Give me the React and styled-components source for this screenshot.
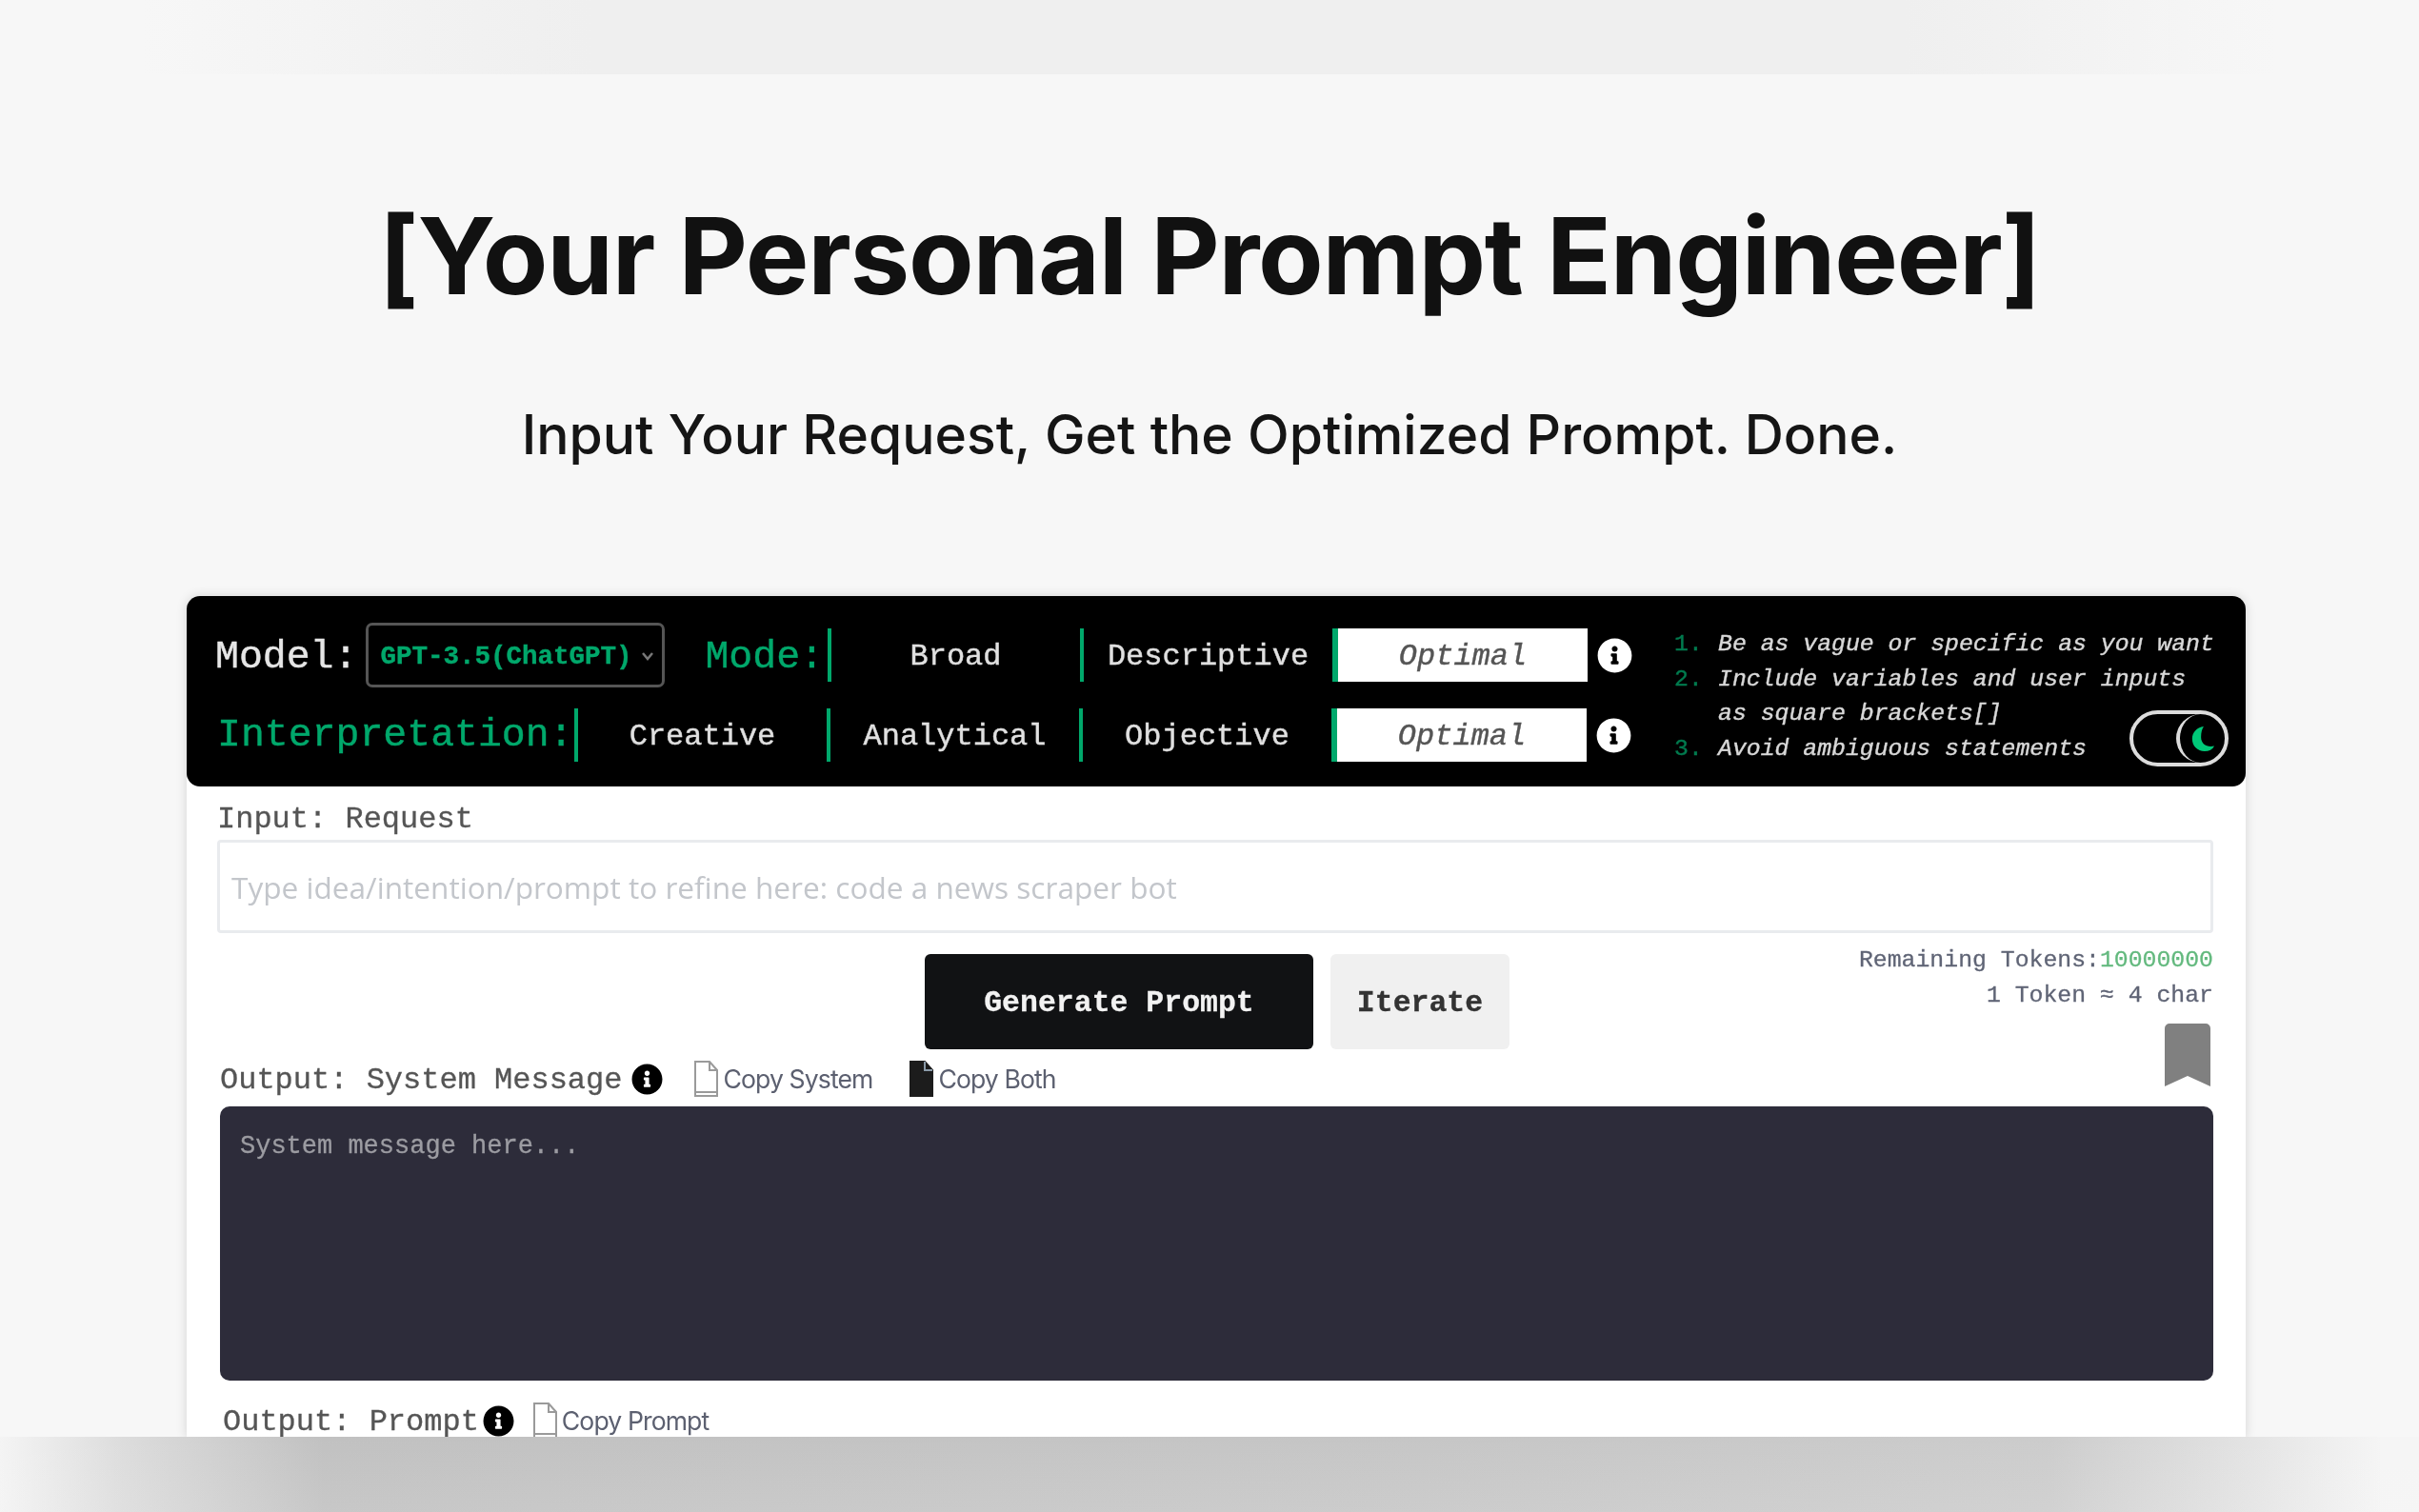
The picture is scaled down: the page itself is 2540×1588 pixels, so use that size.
import React from "react";
import styled, { createGlobalStyle } from "styled-components";
import { FaInfoCircle } from "react-icons/fa";

const GREEN = "#00a86b";
const MONO = '"Liberation Mono", "DejaVu Sans Mono", monospace';
const SANS = 'Inter, "Noto Sans", sans-serif';

const GlobalStyle = createGlobalStyle`
  html, body {
    margin: 0;
    padding: 0;
    background: #f7f7f7;
  }
  * {
    box-sizing: border-box;
  }
`;

const PageFrame = styled.div`
  height: 1588px;
  display: flex;
  flex-direction: column;
  overflow: hidden;
  background: #f7f7f7;
`;

const TopFade = styled.div`
  flex: 0 0 78px;
  background: linear-gradient(90deg, #f7f7f7 150px, #efefef 620px, #efefef 2000px, #f7f7f7 2390px);
`;

const BottomFade = styled.div`
  flex: 0 0 79px;
  background:
    linear-gradient(180deg, rgba(247, 247, 247, 0) 0%, rgba(247, 247, 247, 0.12) 100%),
    linear-gradient(90deg, #f4f4f4 0, #dcdcdc 130px, #c1c1c1 340px, #c6c6c6 1500px, #cccccc 2150px, #e2e2e2 2350px, #f5f5f5 2500px);
`;

const Main = styled.main`
  flex: 1;
  min-height: 0;
  overflow: hidden;
  display: flex;
  flex-direction: column;
  align-items: center;
  filter: blur(0.6px);
`;

const Title = styled.h1`
  margin: 120px 0 0;
  font-family: ${SANS};
  font-size: 112px;
  font-weight: 700;
  line-height: 140px;
  color: #111;
  letter-spacing: -1.25px;
`;

const Subtitle = styled.h2`
  margin: 84px 0 134px;
  font-family: ${SANS};
  font-size: 57px;
  font-weight: 500;
  line-height: 70px;
  color: #151515;
`;

const Card = styled.section`
  flex: none;
  width: 2162px;
  align-self: flex-start;
  margin-left: 196px;
  background: #fff;
  border-radius: 14px 14px 0 0;
  box-shadow: 0 0 12px rgba(0, 0, 0, 0.14);
`;

const Header = styled.header`
  height: 200px;
  display: flex;
  padding: 34px 18px 26px 32px;
  background: #000;
  border-radius: 14px;
  font-family: ${MONO};
  -webkit-text-stroke: 0.4px;
`;

const Controls = styled.div`
  flex: 0 0 1486px;
  display: flex;
  flex-direction: column;
  gap: 28px;
`;

const ControlRow = styled.div`
  height: 56px;
  display: flex;
  align-items: center;
`;

const Lead = styled.div`
  flex: 0 0 ${(p) => p.$width}px;
  display: flex;
  align-items: center;
  justify-content: space-between;
`;

const ModelGroup = styled.div`
  display: flex;
  align-items: center;
  gap: 9px;
  margin-left: -2px;
`;

const FieldLabel = styled.span`
  margin-right: ${(p) => p.$trail || 0}px;
  padding-top: ${(p) => p.$drop}px;
  font-size: 41.5px;
  line-height: 56px;
  color: ${(p) => (p.$accent ? GREEN : "#e6e6e6")};
`;

const ModelSelect = styled.div`
  width: 314px;
  height: 68px;
  display: flex;
  align-items: center;
  justify-content: space-between;
  padding: 2px 8px 0 12px;
  border: 3px solid #555;
  border-radius: 7px;
  color: ${GREEN};
  font-size: 27.5px;
  font-weight: 700;
`;

const Chevron = styled.svg`
  width: 14px;
  height: 10px;
  fill: none;
  stroke: #777;
  stroke-width: 2.5;
`;

const Cell = styled.div`
  flex: 0 0 ${(p) => (p.$active ? 268 : 265)}px;
  height: 100%;
  display: flex;
  align-items: center;
  justify-content: center;
  padding-top: 2px;
  border-left: ${(p) => (p.$active ? 6 : 4)}px solid ${GREEN};
  background: ${(p) => (p.$active ? "#fff" : "transparent")};
  color: ${(p) => (p.$active ? "#555" : "#e0e0e0")};
  font-size: 32px;
  font-style: ${(p) => (p.$active ? "italic" : "normal")};
`;

const HeaderInfo = styled(FaInfoCircle)`
  flex: none;
  margin-left: 10px;
  font-size: 37px;
  color: #fff;
`;

const Tips = styled.div`
  position: relative;
  flex: 1;
  margin: -2px 0 0 44px;
  font-size: 24.8px;
  line-height: 36.6px;
  font-style: italic;
  color: #d8d8d8;
`;

const Tip = styled.div`
  display: flex;
`;

const TipNumber = styled.span`
  flex: 0 0 46px;
  font-style: normal;
  color: #007a4e;
`;

const ThemeToggle = styled.div`
  position: absolute;
  right: 0;
  bottom: -5px;
  width: 104px;
  height: 59px;
  display: flex;
  justify-content: flex-end;
  border: 4px solid #dcdcdc;
  border-radius: 30px;
`;

const ToggleKnob = styled.div`
  width: 51px;
  height: 51px;
  display: flex;
  align-items: center;
  justify-content: center;
  border-left: 4px solid #dcdcdc;
  border-radius: 50%;
`;

const Moon = styled.svg`
  width: 26px;
  height: 28px;
  fill: #00c878;
`;

const Body = styled.div`
  padding: 14px 34px 0 32px;
  font-family: ${MONO};
  -webkit-text-stroke: 0.3px;
`;

const InputLabel = styled.div`
  padding-top: 2px;
  font-size: 32px;
  line-height: 38px;
  color: #555;
  height: 40px;
`;

const RequestInput = styled.input`
  display: block;
  width: 100%;
  height: 98px;
  margin-top: 2px;
  padding: 0 12px;
  border: 3px solid #e9ebee;
  border-radius: 4px;
  outline: none;
  background: #fff;
  font-family: "Open Sans", sans-serif;
  font-size: 31.6px;
  -webkit-text-stroke: 0;

  &::placeholder {
    color: #c3c6cb;
  }
`;

const ActionGrid = styled.div`
  display: grid;
  grid-template-columns: 1fr auto 1fr;
  grid-template-rows: 122px 60px;
`;

const Buttons = styled.div`
  grid-column: 2;
  grid-row: 1;
  display: flex;
  gap: 18px;
  padding: 22px 0 0 4px;
`;

const ActionButton = styled.button`
  height: 100px;
  width: ${(p) => (p.$primary ? 408 : 188)}px;
  padding-top: 4px;
  border: none;
  border-radius: 6px;
  background: ${(p) => (p.$primary ? "#111214" : "#f0f0f0")};
  color: ${(p) => (p.$primary ? "#f2f2f2" : "#333")};
  font-family: ${MONO};
  font-size: 31.5px;
  font-weight: 700;
`;

const TokenColumn = styled.div`
  grid-column: 3;
  grid-row: 1 / span 2;
  display: flex;
  flex-direction: column;
  align-items: flex-end;
  padding-top: 10px;
  font-size: 24.8px;
  line-height: 36.6px;
  color: #5f6475;
`;

const TokenCount = styled.span`
  color: #63b97e;
`;

const SaveMark = styled.svg`
  width: 48px;
  height: 66px;
  margin: 12px 3px 0 0;
  fill: #808080;
`;

const OutputBar = styled.div`
  grid-column: 1 / span 2;
  grid-row: 2;
  display: flex;
  align-items: center;
  height: 38px;
  margin-top: 12px;
  padding-left: 3px;
`;

const PromptBar = styled(OutputBar)`
  margin-top: 23px;
  padding-left: 6px;
`;

const OutputLabel = styled.span`
  padding-top: 3px;
  font-size: 32px;
  color: #555;
  white-space: pre;
`;

const OutputInfo = styled(FaInfoCircle)`
  flex: none;
  margin-left: ${(p) => p.$gap}px;
  font-size: 33px;
  color: #000;
`;

const CopyAction = styled.span`
  display: flex;
  align-items: center;
  gap: 4px;
  margin-left: ${(p) => p.$gap}px;
  font-family: ${SANS};
  font-size: 26.6px;
  letter-spacing: -0.9px;
  color: #5c6070;
  -webkit-text-stroke: 0;
`;

const PageGlyph = styled.svg`
  width: 27px;
  height: 38px;
  fill: ${(p) => (p.$solid ? "#1c1c1c" : "#fff")};
  stroke: ${(p) => (p.$solid ? "#1c1c1c" : "#9a9a9a")};
  stroke-width: 2;
`;

const MessageBox = styled.textarea`
  display: block;
  width: calc(100% - 3px);
  height: 288px;
  margin-left: 3px;
  padding: 26px 21px;
  border: none;
  border-radius: 10px;
  outline: none;
  resize: none;
  background: #2d2c3a;
  font-family: ${MONO};
  font-size: 27px;
  line-height: 32px;

  &::placeholder {
    color: #9c9ca2;
  }
`;

const CopyIcon = ({ solid }) => (
  <PageGlyph $solid={solid} viewBox="0 0 27 38">
    <path d="M2 1h15l8 9v27H2z" />
    <path d="M17 1v9h8" fill="none" stroke={solid ? "#8a9aa8" : "#9a9a9a"} />
    <path d="M2 33h23" fill="none" stroke={solid ? "#1c1c1c" : "#9a9a9a"} />
  </PageGlyph>
);

const App = () => {
  return (
    <PageFrame>
      <GlobalStyle />
      <TopFade />
      <Main>
        <Title>[Your Personal Prompt Engineer]</Title>
        <Subtitle>Input Your Request, Get the Optimized Prompt. Done.</Subtitle>
        <Card>
          <Header>
            <Controls>
              <ControlRow>
                <Lead $width={641}>
                  <ModelGroup>
                    <FieldLabel $drop={3}>Model:</FieldLabel>
                    <ModelSelect>
                      GPT-3.5(ChatGPT)
                      <Chevron viewBox="0 0 14 10">
                        <path d="M2 2l5 6 5-6" />
                      </Chevron>
                    </ModelSelect>
                  </ModelGroup>
                  <FieldLabel $accent $drop={3} $trail={4}>
                    Mode:
                  </FieldLabel>
                </Lead>
                <Cell>Broad</Cell>
                <Cell>Descriptive</Cell>
                <Cell $active>Optimal</Cell>
                <HeaderInfo />
              </ControlRow>
              <ControlRow>
                <Lead $width={375}>
                  <FieldLabel $accent $drop={0}>
                    Interpretation:
                  </FieldLabel>
                </Lead>
                <Cell>Creative</Cell>
                <Cell>Analytical</Cell>
                <Cell>Objective</Cell>
                <Cell $active>Optimal</Cell>
                <HeaderInfo />
              </ControlRow>
            </Controls>
            <Tips>
              <Tip>
                <TipNumber>1.</TipNumber>
                <span>Be as vague or specific as you want</span>
              </Tip>
              <Tip>
                <TipNumber>2.</TipNumber>
                <span>
                  Include variables and user inputs
                  <br />
                  as square brackets[]
                </span>
              </Tip>
              <Tip>
                <TipNumber>3.</TipNumber>
                <span>Avoid ambiguous statements</span>
              </Tip>
              <ThemeToggle>
                <ToggleKnob>
                  <Moon viewBox="0 0 28 30">
                    <path d="M15 1C7 2 2 8 2 15c0 8 6 14 14 14 5 0 9-2 11-6-8 2-15-2-15-10 0-5 1-9 3-12z" />
                  </Moon>
                </ToggleKnob>
              </ThemeToggle>
            </Tips>
          </Header>
          <Body>
            <InputLabel>Input: Request</InputLabel>
            <RequestInput placeholder="Type idea/intention/prompt to refine here: code a news scraper bot" />
            <ActionGrid>
              <Buttons>
                <ActionButton $primary>Generate Prompt</ActionButton>
                <ActionButton>Iterate</ActionButton>
              </Buttons>
              <TokenColumn>
                <div>
                  Remaining Tokens:<TokenCount>10000000</TokenCount>
                </div>
                <div>1 Token ≈ 4 char</div>
                <SaveMark viewBox="0 0 48 66">
                  <path d="M5 0h38a5 5 0 0 1 5 5v61L24 55 0 66V5a5 5 0 0 1 5-5z" />
                </SaveMark>
              </TokenColumn>
              <OutputBar>
                <OutputLabel>Output: System Message</OutputLabel>
                <OutputInfo $gap={10} />
                <CopyAction $gap={32}>
                  <CopyIcon />
                  Copy System
                </CopyAction>
                <CopyAction $gap={38}>
                  <CopyIcon solid />
                  Copy Both
                </CopyAction>
              </OutputBar>
            </ActionGrid>
            <MessageBox placeholder="System message here..." />
            <PromptBar>
              <OutputLabel>Output: Prompt</OutputLabel>
              <OutputInfo $gap={4} />
              <CopyAction $gap={19}>
                <CopyIcon />
                Copy Prompt
              </CopyAction>
            </PromptBar>
          </Body>
        </Card>
      </Main>
      <BottomFade />
    </PageFrame>
  );
};

export default App;
